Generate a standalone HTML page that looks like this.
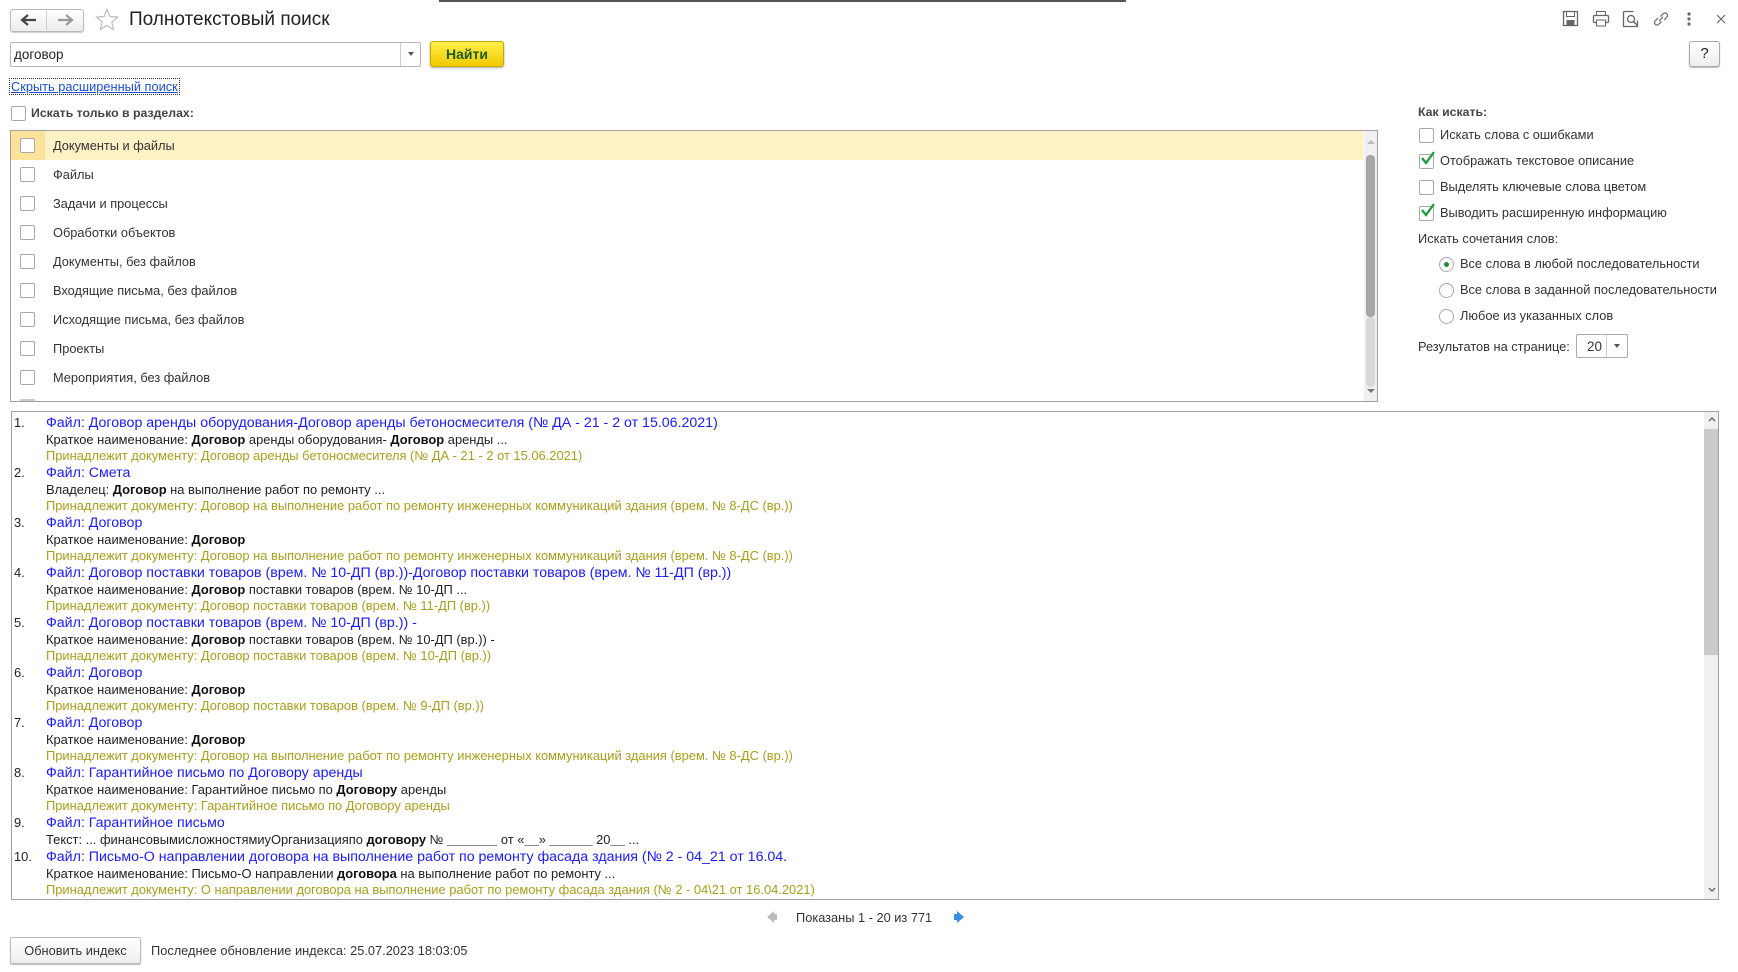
<!DOCTYPE html>
<html><head><meta charset="utf-8">
<style>
*{box-sizing:border-box;margin:0;padding:0}
body{width:1738px;height:972px;background:#fff;font-family:"Liberation Sans",Arial,sans-serif;color:#333;position:relative;overflow:hidden;font-size:12.8px}
.a{position:absolute}
.cb{position:absolute;width:15px;height:15px;border:1px solid #a8a8a8;border-radius:2px;background:#fff}
.rd{position:absolute;width:15px;height:15px;border:1px solid #a8a8a8;border-radius:50%;background:#fff}
.lbl{position:absolute;white-space:nowrap;color:#333}
.res{position:absolute;left:11px;top:411px;width:1708px;height:489px;border:1px solid #a0a0a0;overflow:hidden}
.it{position:absolute;left:0;white-space:nowrap;font-size:12.9px;line-height:16.7px}
.it .n{position:absolute;left:2px;color:#222}
.it .l{position:absolute;left:34px}
.it .l div{height:16.7px}
.bl{color:#1a1aff;font-size:14.2px}
.bk{color:#222}
.ol{color:#a89f1a}
b{color:#111}
.rp{position:absolute;left:-7px;top:0}
</style></head><body>
<div class="a" style="left:439px;top:0;width:687px;height:2px;background:#555"></div>
<!-- nav -->
<div class="a" style="left:10px;top:9px;width:74px;height:23px;border:1px solid #bbb;border-radius:3px;background:linear-gradient(#fff,#ececec);box-shadow:0 1px 1px #ccc"></div>
<div class="a" style="left:46px;top:11px;width:1px;height:19px;background:#ccc"></div>
<svg class="a" style="left:20px;top:13px" width="18" height="14"><path d="M2 7h14M8 2L2 7l6 5" stroke="#444" stroke-width="2.2" fill="none"/></svg>
<svg class="a" style="left:56px;top:13px" width="18" height="14"><path d="M2 7h14M10 2l6 5-6 5" stroke="#999" stroke-width="2.2" fill="none"/></svg>
<svg class="a" style="left:95px;top:8px" width="24" height="23"><path d="M12 1.5l3 7 7.5.6-5.7 5 1.8 7.4L12 17.5 5.4 21.5l1.8-7.4-5.7-5 7.5-.6z" fill="none" stroke="#bbb" stroke-width="1.2"/></svg>
<div class="lbl" style="left:129px;top:9px;font-size:19px;color:#222">Полнотекстовый поиск</div>
<!-- top right icons -->
<svg class="a" style="left:1562px;top:10px" width="17" height="17"><rect x="1.5" y="1.5" width="14" height="14" fill="none" stroke="#666" stroke-width="1.3"/><rect x="4.5" y="1.5" width="8" height="5" fill="none" stroke="#666"/><rect x="4.5" y="10" width="8" height="5.5" fill="#666"/></svg>
<svg class="a" style="left:1592px;top:10px" width="18" height="17"><rect x="4.5" y="1.5" width="9" height="4" fill="none" stroke="#666"/><rect x="1.5" y="5.5" width="15" height="7" rx="1" fill="none" stroke="#666" stroke-width="1.3"/><rect x="4.5" y="10" width="9" height="6" fill="#fff" stroke="#666"/></svg>
<svg class="a" style="left:1622px;top:10px" width="18" height="18"><path d="M1.5 1.5h10M1.5 1.5v15h14v-6" fill="none" stroke="#666" stroke-width="1.3"/><circle cx="9" cy="9" r="3.5" fill="none" stroke="#666" stroke-width="1.3"/><path d="M11.5 11.5l4 4" stroke="#666" stroke-width="1.5"/></svg>
<svg class="a" style="left:1652px;top:10px" width="18" height="18"><path d="M7 11l4-4M6 8l-3 3a2.5 2.5 0 003.5 3.5l3-3M12 10l3-3a2.5 2.5 0 00-3.5-3.5l-3 3" fill="none" stroke="#777" stroke-width="1.3"/></svg>
<svg class="a" style="left:1686px;top:11px" width="6" height="16"><circle cx="3" cy="3" r="1.6" fill="#666"/><circle cx="3" cy="8" r="1.6" fill="#666"/><circle cx="3" cy="13" r="1.6" fill="#666"/></svg>
<svg class="a" style="left:1716px;top:14px" width="10" height="10"><path d="M1 1l8 8M9 1l-8 8" stroke="#666" stroke-width="1.2"/></svg>
<!-- search -->
<div class="a" style="left:10px;top:42px;width:411px;height:25px;border:1px solid #b5b5b5;border-radius:2px"></div>
<div class="a" style="left:400px;top:43px;width:1px;height:23px;background:#ccc"></div>
<svg class="a" style="left:407px;top:51px" width="8" height="6"><path d="M1 1h6l-3 4z" fill="#555"/></svg>
<div class="lbl" style="left:14px;top:47px;font-size:13.5px;color:#222">договор</div>
<div class="a" style="left:430px;top:41px;width:74px;height:26px;border:1px solid #c9a800;border-radius:3px;background:linear-gradient(#fff04a,#f1c900);box-shadow:0 1px 2px #aaa;text-align:center;line-height:24px;font-weight:bold;font-size:14px;color:#1d5d1d">Найти</div>
<div class="a" style="left:1689px;top:41px;width:31px;height:26px;border:1px solid #aaa;border-radius:3px;background:linear-gradient(#fff,#eee);box-shadow:0 1px 1px #bbb;text-align:center;line-height:24px;font-size:15px;color:#222">?</div>
<div class="lbl" style="left:10px;top:79px;font-size:12.8px;color:#1a4fd6;text-decoration:underline;outline:1px dotted #333;padding:0 1px">Скрыть расширенный поиск</div>
<div class="cb" style="left:11px;top:106px"></div>
<div class="lbl" style="left:31px;top:106px;font-weight:bold;font-size:12.3px;color:#444">Искать только в разделах:</div>
<!-- list -->
<div class="a" style="left:10px;top:130px;width:1375px;height:272px;border:1px solid #a0a0a0;overflow:hidden;width:1368px">
 <div class="a" style="left:0;top:0;width:1352px;height:29px;background:#fdf1c6"></div>
 <div class="a" style="left:0;top:0;width:34px;height:29px;background:#fce39a"></div>
 <div class="a" style="left:1353px;top:0;width:14px;height:272px;background:#f0f0f0"></div>
 <div class="a" style="left:1355px;top:24px;width:9px;height:162px;background:#a6a6a6;border-radius:4px"></div>
 <div class="a" style="left:1355px;top:186px;width:9px;height:70px;background:#d8d8d8;border-radius:4px"></div>
 <svg class="a" style="left:1356px;top:8px" width="8" height="5"><path d="M0 5l4-4 4 4z" fill="#bbb"/></svg>
 <svg class="a" style="left:1356px;top:258px" width="8" height="5"><path d="M0 0l4 4 4-4z" fill="#777"/></svg>
</div>
<div class="cb" style="left:20px;top:138px"></div><div class="lbl" style="left:53px;top:138px">Документы и файлы</div>
<div class="cb" style="left:20px;top:167px"></div><div class="lbl" style="left:53px;top:167px">Файлы</div>
<div class="cb" style="left:20px;top:196px"></div><div class="lbl" style="left:53px;top:196px">Задачи и процессы</div>
<div class="cb" style="left:20px;top:225px"></div><div class="lbl" style="left:53px;top:225px">Обработки объектов</div>
<div class="cb" style="left:20px;top:254px"></div><div class="lbl" style="left:53px;top:254px">Документы, без файлов</div>
<div class="cb" style="left:20px;top:283px"></div><div class="lbl" style="left:53px;top:283px">Входящие письма, без файлов</div>
<div class="cb" style="left:20px;top:312px"></div><div class="lbl" style="left:53px;top:312px">Исходящие письма, без файлов</div>
<div class="cb" style="left:20px;top:341px"></div><div class="lbl" style="left:53px;top:341px">Проекты</div>
<div class="cb" style="left:20px;top:370px"></div><div class="lbl" style="left:53px;top:370px">Мероприятия, без файлов</div>
<div class="a" style="left:20px;top:399px;width:15px;height:2px;background:#ccc"></div>
<!-- right panel -->
<div class="rp">
<div class="lbl" style="left:1425px;top:105px;font-weight:bold;font-size:12.3px;color:#444">Как искать:</div>
<div class="cb" style="left:1426px;top:128px"></div><div class="lbl" style="left:1447px;top:127px">Искать слова с ошибками</div>
<div class="cb" style="left:1426px;top:154px"></div><div class="lbl" style="left:1447px;top:153px">Отображать текстовое описание</div>
<svg class="a" style="left:1427px;top:150px" width="16" height="16"><path d="M2 8l4 5 8-11" stroke="#1d9a3c" stroke-width="2.3" fill="none"/></svg>
<div class="cb" style="left:1426px;top:180px"></div><div class="lbl" style="left:1447px;top:179px">Выделять ключевые слова цветом</div>
<div class="cb" style="left:1426px;top:206px"></div><div class="lbl" style="left:1447px;top:205px">Выводить расширенную информацию</div>
<svg class="a" style="left:1427px;top:202px" width="16" height="16"><path d="M2 8l4 5 8-11" stroke="#1d9a3c" stroke-width="2.3" fill="none"/></svg>
<div class="lbl" style="left:1425px;top:231px">Искать сочетания слов:</div>
<div class="rd" style="left:1446px;top:257px"></div><div class="a" style="left:1451px;top:262px;width:5px;height:5px;border-radius:50%;background:#1d8a3c"></div>
<div class="lbl" style="left:1467px;top:256px">Все слова в любой последовательности</div>
<div class="rd" style="left:1446px;top:283px"></div><div class="lbl" style="left:1467px;top:282px">Все слова в заданной последовательности</div>
<div class="rd" style="left:1446px;top:309px"></div><div class="lbl" style="left:1467px;top:308px">Любое из указанных слов</div>
<div class="lbl" style="left:1425px;top:339px">Результатов на странице:</div>
<div class="a" style="left:1583px;top:334px;width:52px;height:24px;border:1px solid #aaa;border-radius:2px"></div>
<div class="a" style="left:1613px;top:335px;width:1px;height:22px;background:#ccc"></div>
<div class="lbl" style="left:1594px;top:339px;font-size:13.5px">20</div>
<svg class="a" style="left:1620px;top:343px" width="8" height="6"><path d="M1 1h6l-3 4z" fill="#555"/></svg>
</div>
<!-- results -->
<div class="res">
 <div class="a" style="left:1692px;top:0;width:15px;height:487px;background:#f0f0f0"></div>
 <div class="a" style="left:1692px;top:17px;width:15px;height:226px;background:#cacaca"></div>
 <svg class="a" style="left:1696px;top:5px" width="8" height="5"><path d="M1 4l3-3 3 3" stroke="#666" stroke-width="1.4" fill="none"/></svg>
 <svg class="a" style="left:1696px;top:475px" width="8" height="5"><path d="M1 1l3 3 3-3" stroke="#666" stroke-width="1.4" fill="none"/></svg>

 <div class="it" style="top:3px"><span class="n">1.</span><div class="l"><div class="bl">Файл: Договор аренды оборудования-Договор аренды бетоносмесителя (№ ДА - 21 - 2 от 15.06.2021)</div><div class="bk">Краткое наименование: <b>Договор</b> аренды оборудования- <b>Договор</b> аренды ...</div><div class="ol">Принадлежит документу: Договор аренды бетоносмесителя (№ ДА - 21 - 2 от 15.06.2021)</div></div></div>
 <div class="it" style="top:53px"><span class="n">2.</span><div class="l"><div class="bl">Файл: Смета</div><div class="bk">Владелец: <b>Договор</b> на выполнение работ по ремонту ...</div><div class="ol">Принадлежит документу: Договор на выполнение работ по ремонту инженерных коммуникаций здания (врем. № 8-ДС (вр.))</div></div></div>
 <div class="it" style="top:103px"><span class="n">3.</span><div class="l"><div class="bl">Файл: Договор</div><div class="bk">Краткое наименование: <b>Договор</b></div><div class="ol">Принадлежит документу: Договор на выполнение работ по ремонту инженерных коммуникаций здания (врем. № 8-ДС (вр.))</div></div></div>
 <div class="it" style="top:153px"><span class="n">4.</span><div class="l"><div class="bl">Файл: Договор поставки товаров (врем. № 10-ДП (вр.))-Договор поставки товаров (врем. № 11-ДП (вр.))</div><div class="bk">Краткое наименование: <b>Договор</b> поставки товаров (врем. № 10-ДП ...</div><div class="ol">Принадлежит документу: Договор поставки товаров (врем. № 11-ДП (вр.))</div></div></div>
 <div class="it" style="top:203px"><span class="n">5.</span><div class="l"><div class="bl">Файл: Договор поставки товаров (врем. № 10-ДП (вр.)) -</div><div class="bk">Краткое наименование: <b>Договор</b> поставки товаров (врем. № 10-ДП (вр.)) -</div><div class="ol">Принадлежит документу: Договор поставки товаров (врем. № 10-ДП (вр.))</div></div></div>
 <div class="it" style="top:253px"><span class="n">6.</span><div class="l"><div class="bl">Файл: Договор</div><div class="bk">Краткое наименование: <b>Договор</b></div><div class="ol">Принадлежит документу: Договор поставки товаров (врем. № 9-ДП (вр.))</div></div></div>
 <div class="it" style="top:303px"><span class="n">7.</span><div class="l"><div class="bl">Файл: Договор</div><div class="bk">Краткое наименование: <b>Договор</b></div><div class="ol">Принадлежит документу: Договор на выполнение работ по ремонту инженерных коммуникаций здания (врем. № 8-ДС (вр.))</div></div></div>
 <div class="it" style="top:353px"><span class="n">8.</span><div class="l"><div class="bl">Файл: Гарантийное письмо по Договору аренды</div><div class="bk">Краткое наименование: Гарантийное письмо по <b>Договору</b> аренды</div><div class="ol">Принадлежит документу: Гарантийное письмо по Договору аренды</div></div></div>
 <div class="it" style="top:403px"><span class="n">9.</span><div class="l"><div class="bl">Файл: Гарантийное письмо</div><div class="bk">Текст: ... финансовымисложностямиуОрганизацияпо <b>договору</b> № <b>_______</b> от «<b>__</b>» <b>______</b> 20<b>__</b> ...</div></div></div>
 <div class="it" style="top:437px"><span class="n">10.</span><div class="l"><div class="bl">Файл: Письмо-О направлении договора на выполнение работ по ремонту фасада здания (№ 2 - 04_21 от 16.04.</div><div class="bk">Краткое наименование: Письмо-О направлении <b>договора</b> на выполнение работ по ремонту ...</div><div class="ol">Принадлежит документу: О направлении договора на выполнение работ по ремонту фасада здания (№ 2 - 04\21 от 16.04.2021)</div></div></div>
</div>
<!-- pagination -->
<svg class="a" style="left:766px;top:910px" width="12" height="14"><path d="M1 7l7-6v3h3v6H8v3z" fill="#bbb"/></svg>
<div class="lbl" style="left:796px;top:910px;color:#333">Показаны 1 - 20 из 771</div>
<svg class="a" style="left:953px;top:910px" width="12" height="14"><path d="M11 7L4 1v3H1v6h3v3z" fill="#3a8ee6"/></svg>
<div class="a" style="left:10px;top:937px;width:131px;height:27px;border:1px solid #bbb;border-radius:2px;background:linear-gradient(#fff,#eee);box-shadow:0 1px 1px #bbb;text-align:center;line-height:25px;color:#333">Обновить индекс</div>
<div class="lbl" style="left:151px;top:943px">Последнее обновление индекса: 25.07.2023 18:03:05</div>
</body></html>
